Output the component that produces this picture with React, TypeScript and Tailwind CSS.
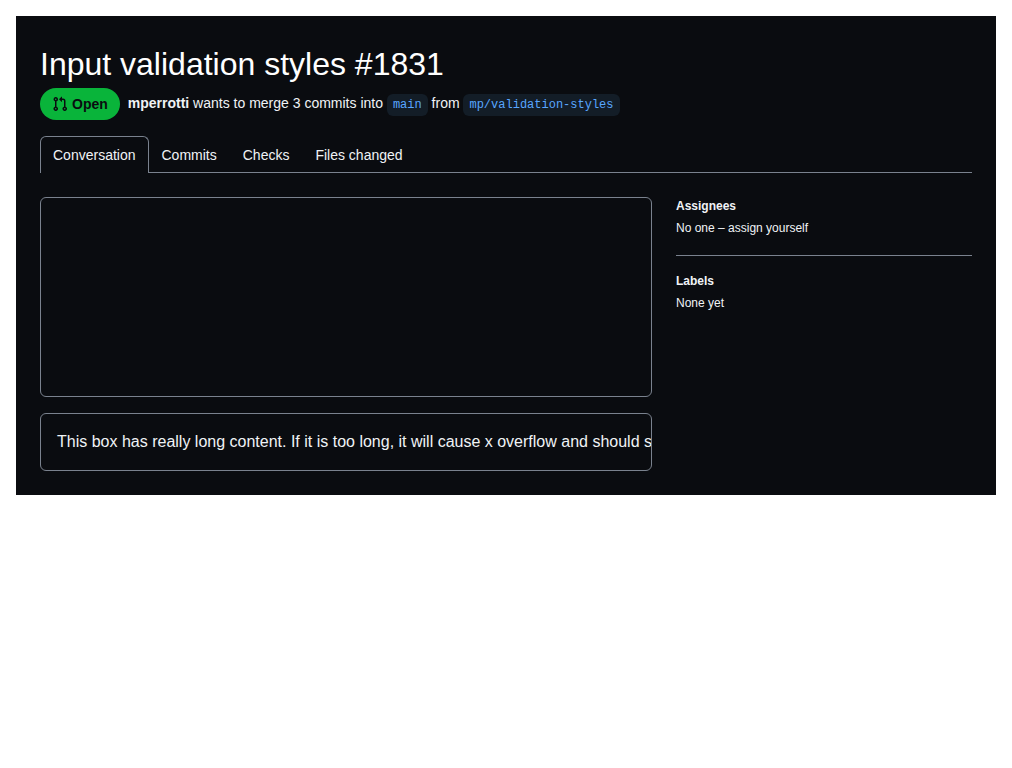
import type { ReactNode } from 'react';

function PullRequestIcon() {
  return (
    <svg width="16" height="16" viewBox="0 0 16 16" fill="currentColor" aria-hidden="true" className="shrink-0">
      <path
        fillRule="evenodd"
        d="M7.177 3.073L9.573.677A.25.25 0 0110 .854v4.792a.25.25 0 01-.427.177L7.177 3.427a.25.25 0 010-.354zM3.75 2.5a.75.75 0 100 1.5.75.75 0 000-1.5zm-2.25.75a2.25 2.25 0 113 2.122v5.256a2.251 2.251 0 11-1.5 0V5.372A2.25 2.25 0 011.5 3.25zM11 2.5h-1V4h1a1 1 0 011 1v5.628a2.251 2.251 0 101.5 0V5A2.5 2.5 0 0011 2.5zm1 10.25a.75.75 0 111.5 0 .75.75 0 01-1.5 0zM3.75 12a.75.75 0 100 1.5.75.75 0 000-1.5z"
      />
    </svg>
  );
}

function BranchName({ children }: { children: ReactNode }) {
  return (
    <a className="inline-block rounded-md bg-[#131d27] px-1.5 py-0.5 font-['Liberation_Mono',monospace] text-xs leading-[18px] text-[#58a6ff]">
      {children}
    </a>
  );
}

function SidebarSection({ title, children }: { title: string; children: ReactNode }) {
  return (
    <section className="text-xs leading-[18px]">
      <h2 className="mb-1 font-bold">{title}</h2>
      <p>{children}</p>
    </section>
  );
}

const tabs = ['Commits', 'Checks', 'Files changed'];

export default function App() {
  return (
    <div className="p-4">
      <main className="h-[479px] bg-[#0a0c10] p-6 font-['Liberation_Sans',sans-serif] text-[#f0f3f6]">
        <h1 className="h-12 text-[32px] leading-[48px] font-normal text-white">Input validation styles #1831</h1>
        <div className="flex h-8 items-center">
          <span className="mr-2 flex h-8 items-center gap-1 rounded-full bg-[#09b43a] px-3 text-sm font-bold text-[#0a0c10]">
            <PullRequestIcon />
            Open
          </span>
          <p className="text-sm leading-[21px]">
            <b>mperrotti</b> wants to merge 3 commits into <BranchName>main</BranchName> from{' '}
            <BranchName>mp/validation-styles</BranchName>
          </p>
        </div>
        <nav className="mt-4 flex h-[37px] border-b border-[#7a828e] text-sm leading-[21px]">
          <a className="-mb-px h-[37px] rounded-t-md border border-b-0 border-[#7a828e] bg-[#0a0c10] px-3 pt-2">Conversation</a>
          {tabs.map((tab) => (
            <a key={tab} className="border border-transparent px-3 pt-2">
              {tab}
            </a>
          ))}
        </nav>
        <div className="mt-6 flex gap-6">
          <div className="flex min-w-0 flex-1 flex-col gap-4">
            <div className="h-[200px] rounded-md border border-[#7a828e]" />
            <div className="h-[58px] overflow-hidden rounded-md border border-[#7a828e] p-4 leading-6 whitespace-nowrap">
              This box has really long content. If it is too long, it will cause x overflow and should show a scrollbar.
            </div>
          </div>
          <aside className="w-[296px] shrink-0">
            <SidebarSection title="Assignees">No one – assign yourself</SidebarSection>
            <hr className="mt-[18px] mb-4 border-[#7a828e]" />
            <SidebarSection title="Labels">None yet</SidebarSection>
          </aside>
        </div>
      </main>
    </div>
  );
}
